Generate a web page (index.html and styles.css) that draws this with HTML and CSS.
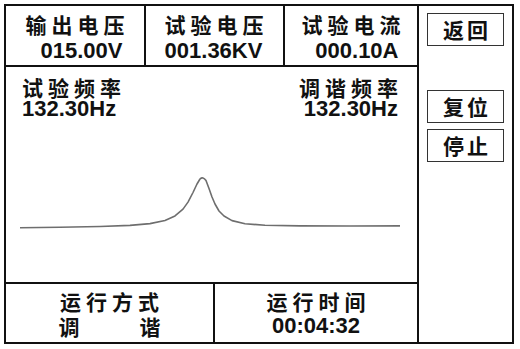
FILE: index.html
```html
<!DOCTYPE html>
<html lang="zh">
<head>
<meta charset="utf-8">
<link rel="stylesheet" href="styles.css">
</head>
<body>
<div class="frame">
  <div class="main">
    <div class="top">
      <div class="cell c1"><div class="blk"><div class="lbl">输出电压</div><div class="val">015.00V</div></div></div>
      <div class="cell c2"><div class="blk"><div class="lbl">试验电压</div><div class="val">001.36KV</div></div></div>
      <div class="cell c3"><div class="blk"><div class="lbl">试验电流</div><div class="val">000.10A</div></div></div>
    </div>
    <div class="mid">
      <div class="freqs">
        <div class="fblk"><div class="lbl">试验频率</div><div class="val">132.30Hz</div></div>
        <div class="fblk right"><div class="lbl">调谐频率</div><div class="val">132.30Hz</div></div>
      </div>
      <svg class="graph" width="411" height="161" viewBox="6 121 411 161">
        <path d="M20,227.7 L60,227.2 L100,226.5 L130,225.4 L150,223.6 L165,220.5 L175,215.9 L183,209.1 L188,202.1 L193,192.5 L197,184 L200,179 Q203,176.2 206,180.5 L209,188.5 L212,197 L215,204 L219,211 L224,216 L232,220.6 L245,223.7 L265,225.3 L300,225.9 L350,226 L400,225.9" fill="none" stroke="#6e6e6e" stroke-width="1.6" stroke-linejoin="round"/>
      </svg>
    </div>
    <div class="bottom">
      <div class="cell b1"><div class="lbl">运行方式</div><div class="mode"><span>调</span><span>谐</span></div></div>
      <div class="cell b2"><div class="lbl">运行时间</div><div class="val time">00:04:32</div></div>
    </div>
  </div>
  <div class="side">
    <div class="btn b-back">返回</div>
    <div class="btn b-reset">复位</div>
    <div class="btn b-stop">停止</div>
  </div>
</div>
</body>
</html>
```
FILE: styles.css
```css
html, body { margin: 0; padding: 0; background: #fff; }
body {
  color: #111;
  font-family: "Noto Sans CJK SC", "Liberation Sans", sans-serif;
}
.frame {
  margin: 4px 0 0 4px;
  width: 510px;
  height: 340px;
  box-sizing: border-box;
  border: 2px solid #111;
  display: flex;
}
.main {
  width: 413px;
  box-sizing: border-box;
  border-right: 2px solid #111;
  display: flex;
  flex-direction: column;
}
.top {
  height: 61px;
  box-sizing: border-box;
  border-bottom: 2px solid #111;
  display: flex;
}
.cell {
  box-sizing: border-box;
  display: flex;
  flex-direction: column;
  align-items: center;
}
.c1 { width: 140px; border-right: 2px solid #111; }
.c2 { width: 139px; border-right: 2px solid #111; }
.c3 { flex: 1; }
.blk { text-align: right; padding-top: 6px; }
.blk .val { margin-top: 4px; }
.lbl {
  font-family: "Noto Sans CJK SC", sans-serif;
  font-weight: 700;
  font-size: 21px;
  line-height: 24px;
  letter-spacing: 5px;
  margin-right: -5px;
  text-align: left;
}
.val {
  font-family: "Liberation Sans", Arial, sans-serif;
  font-weight: 700;
  font-size: 22px;
  line-height: 22px;
  margin-right: 2px;
}
.mid {
  flex: 1;
  display: flex;
  flex-direction: column;
}
.freqs {
  height: 54px;
  display: flex;
  justify-content: space-between;
  padding: 9px 19px 0 16px;
  box-sizing: border-box;
}
.fblk .lbl { line-height: 22px; }
.fblk .val { margin: 1px 0 0 0; line-height: 20px; text-align: left; }
.fblk.right .val { text-align: right; }
.graph { display: block; }
.bottom {
  height: 60px;
  box-sizing: border-box;
  border-top: 2px solid #111;
  display: flex;
}
.b1 { width: 209px; border-right: 2px solid #111; padding-top: 5px; }
.b2 { flex: 1; padding-top: 5px; }
.mode {
  width: 102px;
  display: flex;
  justify-content: space-between;
  font-size: 21px;
  line-height: 26px;
  font-weight: 700;
}
.time { margin-right: 0; line-height: 26px; font-size: 22px; }
.side {
  flex: 1;
  display: flex;
  flex-direction: column;
  padding: 7px 0 0 8px;
}
.btn {
  width: 77px;
  height: 33px;
  box-sizing: border-box;
  border: 1px solid #333;
  font-size: 21px;
  font-weight: 700;
  letter-spacing: 3px;
  text-indent: 3px;
  line-height: 30px;
  text-align: center;
}
.b-reset { margin-top: 44px; }
.b-stop { margin-top: 6px; }
```
